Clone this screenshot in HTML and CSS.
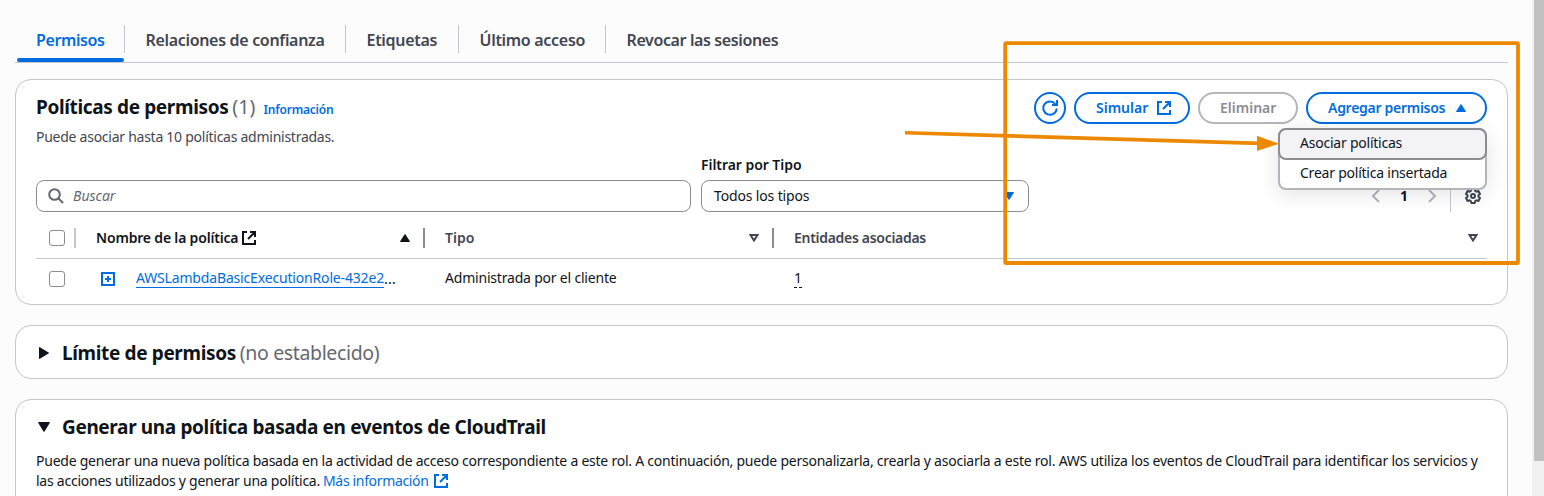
FILE: index.html
```html
<!DOCTYPE html>
<html lang="es">
<head>
<meta charset="utf-8">
<title>Permisos</title>
<link rel="stylesheet" href="styles.css">
</head>
<body>
<svg class="defs" width="0" height="0">
  <symbol id="ext" viewBox="0 0 16 16"><path d="M6 2H2v12h12v-4M9 2h5v5M7 9l6.500-6.500" fill="none" stroke="currentColor" stroke-width="2"/></symbol>
</svg>
<div class="page">
  <main class="content">
    <nav class="tabs">
      <a class="tab active"><span class="t1">Permisos</span></a>
      <a class="tab"><span class="t2">Relaciones de confianza</span></a>
      <a class="tab"><span class="t3">Etiquetas</span></a>
      <a class="tab"><span class="t4">Último acceso</span></a>
      <a class="tab"><span class="t5">Revocar las sesiones</span></a>
    </nav>

    <section class="card policies">
      <div class="card-head">
        <div class="heading">
          <div class="title-row"><h2 class="h2a">Políticas de permisos</h2><span class="count">(1)</span><a class="info">Información</a></div>
          <p class="desc">Puede asociar hasta 10 políticas administradas.</p>
        </div>
        <div class="actions">
          <button class="btn round"><svg width="16" height="16" viewBox="0 0 16 16"><path d="M14.700 8.500A6.700 6.700 0 1 1 13.300 4M15 0v5h-5" fill="none" stroke="currentColor" stroke-width="2"/></svg></button>
          <button class="btn simulate"><span>Simular</span><svg width="16" height="16"><use href="#ext"/></svg></button>
          <button class="btn disabled"><span>Eliminar</span></button>
          <div class="dropdown">
            <button class="btn add"><span>Agregar permisos</span><svg width="10" height="8" viewBox="0 0 10 8"><path d="M5 .5 9.500 7.500H.5z" fill="currentColor" stroke="currentColor" stroke-linejoin="round"/></svg></button>
            <div class="menu">
              <div class="item hover">Asociar políticas</div>
              <div class="item">Crear política insertada</div>
            </div>
          </div>
        </div>
      </div>
      <div class="filters">
        <div class="search"><svg width="16" height="16" viewBox="0 0 16 16"><circle cx="6.500" cy="6.500" r="5.300" fill="none" stroke="currentColor" stroke-width="2"/><path d="m10.300 10.300 4.700 4.700" stroke="currentColor" stroke-width="2"/></svg><span>Buscar</span></div>
        <div class="filter"><label>Filtrar por Tipo</label>
          <div class="select"><span>Todos los tipos</span><svg width="10" height="8" viewBox="0 0 10 8"><path d="M.5.5h9L5 7.500z" fill="currentColor" stroke="currentColor" stroke-linejoin="round"/></svg></div>
        </div>
        <div class="pager">
          <svg class="chev" width="9" height="14" viewBox="0 0 9 14"><path d="M8 1 2 7l6 6" fill="none" stroke="currentColor" stroke-width="2"/></svg>
          <b class="pagenum">1</b>
          <svg class="chev" width="9" height="14" viewBox="0 0 9 14"><path d="m1 1 6 6-6 6" fill="none" stroke="currentColor" stroke-width="2"/></svg>
          <div class="gearbox"><svg width="16" height="16" viewBox="0 0 16 16" fill="none" stroke="currentColor" stroke-width="2"><path stroke-linejoin="round" d="M6.300 1h3.400l.5 2 1.200.7 2-.7 1.600 2.900L13.500 7.300v1.400L15 10.100 13.400 13l-2-.7-1.200.7-.5 2H6.300l-.5-2-1.200-.7-2 .7L1 10.100l1.500-1.400V7.300L1 5.900 2.600 3l2 .7L5.800 3z"/><circle cx="8" cy="8" r="2"/></svg></div>
        </div>
      </div>
      <div class="grid">
        <div class="row thead">
          <div class="cell chk"><i class="box"></i><i class="bar light"></i></div>
          <div class="cell sorted"><span class="c1">Nombre de la política</span><svg width="16" height="16"><use href="#ext"/></svg><svg class="sort" width="10" height="8" viewBox="0 0 10 8"><path d="M5 .5 9.500 7.500H.5z" fill="currentColor" stroke="currentColor" stroke-linejoin="round"/></svg><i class="bar"></i></div>
          <div class="cell"><span class="c2">Tipo</span><svg class="sort" width="10" height="8" viewBox="0 0 10 8"><path d="M1.500 1h7L5 6.500z" fill="none" stroke="currentColor" stroke-width="2"/></svg><i class="bar"></i></div>
          <div class="cell last"><span class="c3">Entidades asociadas</span><svg class="sort" width="10" height="8" viewBox="0 0 10 8"><path d="M1.500 1h7L5 6.500z" fill="none" stroke="currentColor" stroke-width="2"/></svg></div>
        </div>
        <div class="row trow">
          <div class="cell chk"><i class="box"></i></div>
          <div class="cell policy"><svg class="plus" width="14" height="14" viewBox="0 0 14 14"><path d="M1 1h12v12H1zM7 4v6M4 7h6" fill="none" stroke="currentColor" stroke-width="2"/></svg><a class="name">AWSLambdaBasicExecutionRole-432e2</a><span class="dots">…</span></div>
          <div class="cell"><span class="type">Administrada por el cliente</span></div>
          <div class="cell"><span class="entities">1</span></div>
        </div>
      </div>
    </section>

    <section class="card limit">
      <svg width="10" height="12" viewBox="0 0 10 12"><path d="M.5.5 9.500 6 .5 11.500z" fill="currentColor" stroke="currentColor" stroke-linejoin="round"/></svg>
      <h2 class="h2b">Límite de permisos</h2><span class="unset">(no establecido)</span>
    </section>

    <section class="card generate">
      <div class="gen-head">
        <svg width="12" height="10" viewBox="0 0 12 10"><path d="M.5.5h11L6 9.500z" fill="currentColor" stroke="currentColor" stroke-linejoin="round"/></svg>
        <h2 class="h2d">Generar una política basada en eventos de CloudTrail</h2>
      </div>
      <p class="para"><span>Puede generar una nueva política basada en la actividad de acceso correspondiente a este rol. A continuación, puede personalizarla, crearla y asociarla a este rol. AWS utiliza los eventos de CloudTrail para identificar los servicios y</span></p>
      <p class="para"><span>las acciones utilizados y generar una política.</span><a class="more"><span>Más información</span><svg width="16" height="16"><use href="#ext"/></svg></a></p>
    </section>
  </main>
  <div class="scrollbar"><div class="thumb"></div></div>
</div>
<svg class="annotation" width="1544" height="496" viewBox="0 0 1544 496">
  <rect x="1005.200" y="43.200" width="512.800" height="219.800" rx="1" fill="none" stroke="#ed8900" stroke-width="3.800"/>
  <path d="M905 132.800 1260 143.400" stroke="#ed8900" stroke-width="3.600"/>
  <path d="M1257 135.800 1279 143.700 1257 151z" fill="#ed8900"/>
</svg>
</body>
</html>
```
FILE: styles.css
```css
* { box-sizing: border-box; }
body { margin: 0; height: 496px; overflow: hidden; background: #fcfcfd; color: #0f141a; font: 14px/20px "Noto Sans", "Open Sans", sans-serif; }
h2, p { margin: 0; }
.defs { position: absolute; }
svg { display: block; flex: none; }
span, h2, a, label { white-space: nowrap; }
.page { display: flex; height: 496px; overflow: hidden; }
.content { width: 1532px; flex: none; padding: 17px 24px 0 15px; }

.tabs { display: flex; height: 46px; border-bottom: 1px solid #c6c6cd; padding-left: 1px; margin-bottom: 16px; }
.tab { position: relative; display: flex; align-items: center; height: 45px; width: 221px; padding: 1px 0 0 21.5px; font-size: 16px; font-weight: 600; letter-spacing: -.32px; color: #424650; }
.tab + .tab::before { content: ""; position: absolute; left: 0; top: 8px; width: 1px; height: 28px; background: #c6c6cd; }
.tab.active { width: 108px; padding-left: 20px; letter-spacing: -.4px; color: #006ce0; }
.tab:nth-child(3) { width: 113px; }
.tab:nth-child(4) { width: 147px; }
.t3, .t4 { letter-spacing: -.3px; }
.t5 { letter-spacing: -.38px; }
.tab.active::after { content: ""; position: absolute; left: 1px; right: 0; bottom: 0; height: 4px; border-radius: 2px; background: #006ce0; }

.card { background: #fff; border: 1px solid #c6c6cd; border-radius: 16px; padding: 12px 20px 0; width: 1493px; }
.policies { height: 226px; margin-bottom: 20px; }
.card-head { display: flex; justify-content: space-between; height: 88px; }
.title-row { display: flex; align-items: baseline; height: 30px; line-height: 30px; }
h2 { font-size: 19px; font-weight: 700; letter-spacing: -.36px; }
.count, .unset { font-size: 19.5px; font-weight: 400; color: #656871; }
.count { margin-left: 4px; letter-spacing: .1px; }
.unset { margin-left: 4px; letter-spacing: -.36px; }
.info { margin-left: 8px; font-size: 12px; font-weight: 600; letter-spacing: -.2px; color: #006ce0; }
.desc { color: #424650; padding-top: 5px; letter-spacing: -.26px; }
.actions { display: flex; gap: 8px; align-items: flex-start; }
.btn { display: flex; align-items: center; height: 32px; border: 2px solid #006ce0; border-radius: 16px; background: #fff; color: #006ce0; font: 600 14px/20px "Noto Sans", sans-serif; letter-spacing: 0; padding: 0 20px; }
.btn span { margin-top: -1px; }
.round { width: 32px; padding: 0 6px; }
.simulate { width: 116px; justify-content: space-between; padding-right: 16px; }
.disabled { width: 100px; border-color: #b4b4bb; color: #8c8c94; }
.dropdown { position: relative; }
.add { width: 181px; justify-content: space-between; letter-spacing: -.28px; padding-right: 19px; }
.menu { position: absolute; right: 0; top: 36px; width: 209px; height: 62px; border: 2px solid #b4b4bb; border-radius: 8px; background: #fff; box-shadow: 0 4px 20px 1px rgba(0, 7, 22, .1); z-index: 2; letter-spacing: -.23px; }
.item { height: 30px; padding: 3px 20px 0; }
.item.hover { margin: -2px -2px 0; height: 32px; border: 2px solid #8c8c94; border-radius: 8px; background: #f3f3f7; }

.filters { display: flex; align-items: flex-end; height: 32px; }
.search { display: flex; align-items: center; gap: 9px; width: 655px; height: 32px; border: 1px solid #8c8c94; border-radius: 8px; padding: 0 11px; color: #656871; font-style: italic; margin-right: 10px; }
.filter { width: 328px; }
.filter label { display: inline-block; height: 25px; font-weight: 600; letter-spacing: -.05px; }
.select { display: flex; align-items: center; justify-content: space-between; height: 32px; border: 1px solid #8c8c94; border-radius: 8px; padding: 0 14px 0 12px; }
.select span { letter-spacing: -.15px; }
.select svg { color: #006ce0; }
.pager { display: flex; align-items: center; height: 32px; margin-left: auto; }
.chev { color: #b4b4bb; }
.pagenum { width: 48px; text-align: center; }
.gearbox { display: flex; align-items: center; height: 32px; margin-left: 13px; border-left: 1px solid #c6c6cd; padding: 0 6px 0 14px; color: #424650; }

.grid { padding-top: 6px; }
.row { display: grid; grid-template-columns: 40px 349px 349px 1fr; height: 40px; }
.thead { height: 41px; border-bottom: 1px solid #c6c6cd; font-weight: 600; color: #424650; }
.cell { display: flex; align-items: center; height: 40px; padding-left: 20px; }
.chk { padding-left: 13px; }
.box { width: 16px; height: 16px; border: 1px solid #8c8c94; border-radius: 3px; }
.bar { width: 2px; height: 20px; background: #8c8c94; margin-left: 13px; }
.bar.light { background: #c6c6cd; margin-left: auto; }
.sorted { color: #0f141a; gap: 3px; }
.sorted .bar { margin-left: 10px; }
.c1 { letter-spacing: -.18px; }
.c3 { letter-spacing: -.3px; }
.sort { margin-left: auto; }
.last { padding-right: 9px; }
.policy { padding-left: 25px; }
.plus { color: #006ce0; margin-right: 21px; }
.name { color: #006ce0; border-bottom: 1px solid #006ce0; height: 19px; line-height: 18px; letter-spacing: -.167px; margin-top: -2px; }
.dots { margin-top: -2px; font-size: 15px; letter-spacing: 1px; }
.type { margin-top: -2px; letter-spacing: -.2px; }
.entities { border-bottom: 1px dashed #0f141a; height: 19px; line-height: 18px; margin-top: -2px; }

.limit { display: flex; align-items: center; height: 54px; margin-bottom: 20px; padding: 1px 23px 0; }
.h2b { margin-left: 13px; }
.generate { height: 200px; }
.gen-head { display: flex; align-items: center; height: 30px; padding-left: 2px; margin-bottom: 9px; }
.h2d { margin-left: 12px; }
.para { display: flex; height: 20px; letter-spacing: -.238px; }
.more { display: flex; align-items: center; gap: 4px; color: #006ce0; margin-left: 3px; letter-spacing: -.34px; }

.scrollbar { width: 12px; height: 496px; background: #f1f1f1; padding-left: 2px; }
.thumb { height: 461px; background: #c1c1c1; }
.annotation { position: absolute; left: 0; top: 0; z-index: 5; }
```
